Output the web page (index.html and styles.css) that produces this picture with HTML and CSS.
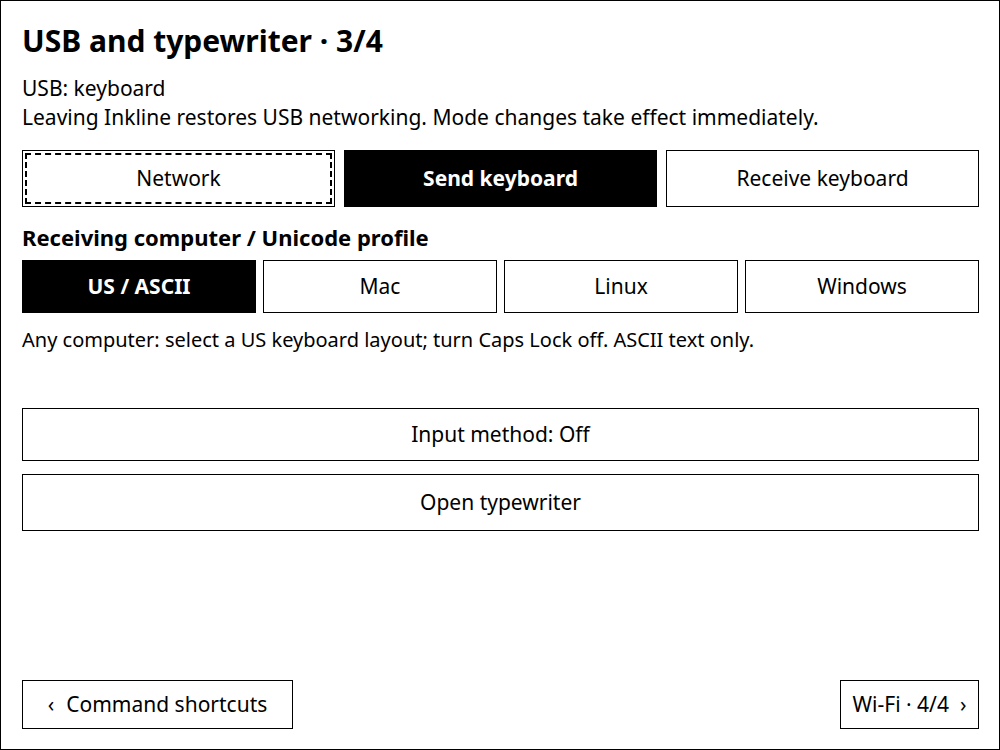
FILE: index.html
```html
<!DOCTYPE html>
<html lang="en">
<head>
<meta charset="utf-8">
<title>USB and typewriter</title>
<link rel="stylesheet" href="styles.css">
</head>
<body>
<div class="screen">
  <h1 class="title">USB and typewriter · 3/4</h1>
  <p class="status">USB: keyboard</p>
  <p class="note">Leaving Inkline restores USB networking. Mode changes take effect immediately.</p>
  <div class="modes">
    <div class="btn tall focused">Network</div>
    <div class="btn tall selected">Send keyboard</div>
    <div class="btn tall">Receive keyboard</div>
  </div>
  <h2 class="section">Receiving computer / Unicode profile</h2>
  <div class="profiles">
    <div class="btn selected">US / ASCII</div>
    <div class="btn">Mac</div>
    <div class="btn">Linux</div>
    <div class="btn">Windows</div>
  </div>
  <p class="hint">Any computer: select a US keyboard layout; turn Caps Lock off. ASCII text only.</p>
  <div class="btn wide input">Input method: Off</div>
  <div class="btn wide tall open">Open typewriter</div>
  <div class="footer">
    <div class="btn nav prev"><span class="chev">‹</span><span>Command shortcuts</span></div>
    <div class="btn nav next"><span>Wi-Fi · 4/4</span><span class="chev">›</span></div>
  </div>
</div>
</body>
</html>
```
FILE: styles.css
```css
html, body {
  margin: 0;
  padding: 0;
  background: #fff;
}
body {
  font-family: "Noto Sans", "Open Sans", sans-serif;
  color: #000;
  font-size: 21px;
}
.screen {
  box-sizing: border-box;
  width: 1000px;
  height: 750px;
  border: 1px solid #000;
  padding: 20px 20px 20px 21px;
  display: flex;
  flex-direction: column;
}
.title {
  margin: 0;
  font-size: 30px;
  font-weight: 700;
  line-height: 40px;
}
.status {
  margin: 13px 0 0;
  line-height: 29px;
}
.note {
  margin: 0;
  line-height: 29px;
}
.btn {
  box-sizing: border-box;
  height: 53px;
  padding-bottom: 2px;
  border: 1px solid #000;
  background: #fff;
  display: flex;
  align-items: center;
  justify-content: center;
  line-height: 28px;
  white-space: nowrap;
}
.btn.tall {
  height: 57px;
}
.btn.selected {
  background: #000;
  color: #fff;
  font-weight: 700;
}
.btn.focused {
  outline: 2px dashed #000;
  outline-offset: -5px;
}
.modes {
  margin-top: 18px;
  display: grid;
  grid-template-columns: repeat(3, 1fr);
  gap: 9px;
}
.section {
  margin: 16px 0 0;
  font-size: 22px;
  font-weight: 700;
  line-height: 29px;
}
.profiles {
  margin-top: 8px;
  display: grid;
  grid-template-columns: repeat(4, 1fr);
  gap: 7px;
}
.hint {
  margin: 12px 0 0;
  font-size: 20px;
  line-height: 29px;
}
.input {
  margin-top: 54px;
}
.open {
  margin-top: 13px;
}
.footer {
  margin-top: auto;
  display: flex;
  justify-content: space-between;
}
.nav {
  height: 49px;
}
.prev {
  width: 271px;
  gap: 12px;
}
.next {
  width: 139px;
  gap: 11px;
}
```
